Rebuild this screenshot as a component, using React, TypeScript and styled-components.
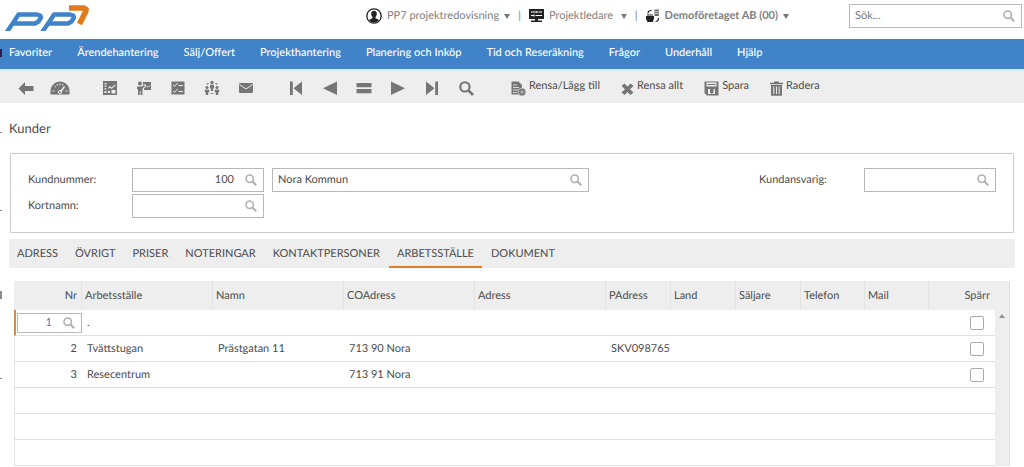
import React from 'react';
import styled, { createGlobalStyle } from 'styled-components';

const GlobalStyle = createGlobalStyle`
  *, *::before, *::after { box-sizing: border-box; }
  body {
    margin: 0;
    background: #fff;
    color: #4c4c4c;
    font-family: Lato, "Liberation Sans", sans-serif;
    font-size: 11px;
    line-height: 16px;
    text-rendering: geometricPrecision;
  }
  button, input { font: inherit; color: inherit; text-rendering: inherit; }
  button { border: 0; padding: 0; background: none; cursor: pointer; }
`;

const Page = styled.div`
  position: relative;
  overflow: hidden;
`;

const EdgeMark = styled.span<{ $top: number; $tall?: boolean; $dark?: boolean }>`
  position: absolute;
  left: 0;
  top: ${(p) => p.$top}px;
  width: 2px;
  height: ${(p) => (p.$tall ? 8 : 1)}px;
  background: ${(p) => (p.$dark ? '#2b1f4d' : '#8c8c8c')};
`;

const Header = styled.header`
  display: flex;
  align-items: flex-start;
  height: 39px;
  padding: 4px 2px 0 4px;
`;

const Logo = styled.a`
  display: block;
  svg { display: block; }
`;

const Context = styled.div`
  display: flex;
  align-items: center;
  gap: 8px;
  height: 24px;
  margin-left: auto;
  margin-right: 60px;
  color: #808080;
`;

const ContextButton = styled.button<{ $strong?: boolean }>`
  display: flex;
  align-items: center;
  gap: 5px;
  font-weight: ${(p) => (p.$strong ? 700 : 400)};
  svg { flex: none; }
`;

const Caret = styled.span`
  border: 3px solid transparent;
  border-top: 5px solid #777;
  border-bottom: 0;
`;

const Nav = styled.nav`
  display: flex;
  align-items: center;
  gap: 25px;
  height: 30px;
  padding: 0 9px 2px;
  background: #4083c9;
`;

const NavLink = styled.a`
  color: #fff;
  font-weight: 500;
  text-decoration: none;
  white-space: nowrap;
`;

const Toolbar = styled.div`
  display: flex;
  align-items: center;
  height: 34px;
  padding: 2px 9px 0;
  gap: 16px;
  border-top: 2px solid #d6ecfa;
  background: #eee;
`;

const ToolGroup = styled.div<{ $wide?: boolean }>`
  display: flex;
  gap: ${(p) => (p.$wide ? 21 : 0)}px;
  margin-left: ${(p) => (p.$wide ? 12 : 0)}px;
`;

const IconButton = styled.button`
  display: flex;
  align-items: center;
  justify-content: center;
  width: 34px;
  height: 24px;
  color: #757575;
`;

const TextButton = styled.button`
  display: flex;
  align-items: flex-start;
  gap: 3px;
  height: 20px;
  white-space: nowrap;
  svg { flex: none; margin-top: 3px; color: #757575; }
`;

const Title = styled.h1`
  margin: 0;
  padding: 15px 9px;
  font-size: 13px;
  line-height: 20px;
  font-weight: 400;
`;

const CustomerForm = styled.form`
  display: grid;
  grid-template-columns: 104px 132px minmax(100px, 325px) 1fr 105px 132px;
  grid-auto-rows: 24px;
  row-gap: 2px;
  align-items: center;
  margin: 0 10px 6px;
  padding: 14px 17px;
  border: 1px solid #ccc;
  border-radius: 2px;
  box-shadow: 0 0 1px #ccc;
`;

const Ansvarig = styled.label`
  grid-column: 5;
`;

const FieldBox = styled.div<{ $inset?: boolean; $small?: boolean }>`
  display: flex;
  align-items: center;
  height: ${(p) => (p.$small ? 20 : 24)}px;
  margin-left: ${(p) => (p.$inset ? 8 : 0)}px;
  padding-right: 6px;
  border: 1px solid #b8b8b8;
  background: #fff;
`;

const SearchBox = styled(FieldBox)`
  width: 173px;
`;

const TextInput = styled.input<{ $right?: boolean; $blue?: boolean }>`
  flex: 1;
  min-width: 0;
  height: 16px;
  padding: 0 5px;
  border: 0;
  outline: 0;
  background: none;
  text-align: ${(p) => (p.$right ? 'right' : 'left')};
  color: ${(p) => (p.$blue ? '#4083c9' : '#4c4c4c')};
  &::placeholder { color: #777; opacity: 1; }
`;

const LookupButton = styled.button`
  display: flex;
  margin-left: 6px;
  color: #b0b0b0;
`;

const Tabs = styled.div`
  display: flex;
  gap: 1px;
  height: 29px;
  margin: 0 9px 13px;
  background: #eee;
`;

const Tab = styled.button<{ $active?: boolean }>`
  padding: 0 8px;
  border-top: 2px solid transparent;
  border-bottom: 2px solid ${(p) => (p.$active ? '#e07b28' : 'transparent')};
  white-space: nowrap;
`;

const TableWrap = styled.div`
  margin: 0 15px 0 14px;
`;

const Grid = styled.table`
  width: 100%;
  table-layout: fixed;
  border-collapse: separate;
  border-spacing: 0;
  border-right: 1px solid #e2e2e2;
`;

const HeadCell = styled.th<{ $right?: boolean; $last?: boolean }>`
  height: 29px;
  padding: 1px 4px 0 3px;
  background: #eee;
  border-right: 1px solid ${(p) => (p.$last ? '#eee' : '#e2e2e2')};
  font-weight: 400;
  text-align: ${(p) => (p.$right ? 'right' : 'left')};
`;

const Cell = styled.td<{ $right?: boolean; $first?: boolean; $selected?: boolean }>`
  height: 26px;
  padding: ${(p) => (p.$selected ? '0 0 0 1px' : '0 5px')};
  border-bottom: 1px solid #e0e0e0;
  border-left: ${(p) => (p.$selected ? '2px solid #d98a4a' : p.$first ? '1px solid #e2e2e2' : '0')};
  text-align: ${(p) => (p.$right ? 'right' : 'left')};
  white-space: nowrap;
`;

const CheckCell = styled(Cell)`
  padding-right: 11px;
`;

const Check = styled.input`
  appearance: none;
  display: block;
  width: 14px;
  height: 14px;
  margin: 0 0 0 auto;
  border: 1px solid #aaa;
  border-radius: 2px;
  background: #fff;
`;

const ScrollTrack = styled.td`
  padding: 4px 0 0;
  background: #eee;
  vertical-align: top;
`;

const ScrollUp = styled.button`
  display: block;
  margin: 0 auto;
  border: 3px solid transparent;
  border-top: 0;
  border-bottom: 4px solid #909090;
`;

const Magnifier = ({ size = 12, width = 1.6 }: { size?: number; width?: number }) => (
  <svg width={size} height={size} viewBox="0 0 12 12" fill="none" stroke="currentColor" aria-hidden="true">
    <circle cx="4.7" cy="4.7" r="3.7" strokeWidth={width} />
    <path d="M7.5 7.5 L11.2 11.2" strokeWidth={width + 0.4} />
  </svg>
);

const Drawing = ({ w = 16, h = 16, children }: { w?: number; h?: number; children: React.ReactNode }) => (
  <svg width={w} height={h} viewBox={`0 0 ${w} ${h}`} fill="currentColor" aria-hidden="true">
    {children}
  </svg>
);

const BackIcon = () => (
  <Drawing><path d="M.5 8.500 7 2v4h8.500v5H7v4z" /></Drawing>
);

const GaugeIcon = () => (
  <Drawing w={20} h={16}>
    <path d="M10 1.500C4.500 1.500.5 6 .5 11v3.500h19V11C19.500 6 15.500 1.500 10 1.500z" />
    <g stroke="#eee" strokeWidth="1" fill="none">
      <path d="M2.500 11h2M15.500 11h2M4.500 6l1.300 1.200M10 3.300v2M7 4l.5 1.500M13 4l-.5 1.500" />
      <path d="M10.500 12 14.500 6.500" strokeWidth="1.500" />
      <circle cx="10" cy="12" r="1.600" />
    </g>
  </Drawing>
);

const PlanIcon = () => (
  <Drawing>
    <path d="M1 1h14v14H1z" />
    <g fill="#eee">
      <path d="M2.500 3h2v1.200h-2zM2.500 5.600h2v1.200h-2zM2.500 8.200h2v1.200h-2zM2.500 11h2v2h-2zM9.500 10h4v3.500h-4zM6 11h2v2H6z" />
      <path d="m6 8 2-2 1.500 1.500L13 4.500l.7.8-4.200 3.600L8 7.400 6.500 8.800z" />
    </g>
  </Drawing>
);

const TeacherIcon = () => (
  <Drawing>
    <circle cx="4" cy="3.500" r="2" />
    <path d="M1 6.500h5l2-1.500 1 1-2.500 2.500V15H4.600v-4h-.8v4H2V9L1 9.500z" />
    <path d="M7 2h8v8H8V8.500l2.500-2.800L8.800 4 7 5z" />
    <path d="m10.500 8 1.500-2 1 1 1.300-2" stroke="#ccc" fill="none" strokeWidth=".8" />
  </Drawing>
);

const ChecklistIcon = () => (
  <Drawing>
    <path d="M1.500 1.500h13v13h-13z" />
    <path d="m3 5 1.500 1.500L7.500 3M8.500 5.500h4.500M3 11l1.500 1.500L7.500 9M8.500 11.500h4.500" stroke="#eee" strokeWidth="1" fill="none" />
  </Drawing>
);

const PeopleIcon = () => (
  <Drawing>
    <circle cx="8" cy="2.500" r="1.700" />
    <path d="M6 4.800h4v3.400h-.8V11H6.800V8.200H6z" />
    <circle cx="3" cy="7.500" r="1.600" />
    <path d="M.8 9.700h4.400v2.600h-1V15H1.800v-2.700h-1z" />
    <circle cx="13" cy="7.500" r="1.600" />
    <path d="M10.800 9.700h4.400v2.600h-1V15h-2.400v-2.700h-1z" />
    <path d="M3 5V3.500h2M13 5V3.500h-2M6.500 13.500h3" stroke="currentColor" fill="none" strokeWidth=".8" />
  </Drawing>
);

const MailIcon = () => (
  <Drawing>
    <rect x="1" y="3" width="14" height="10" rx="1" />
    <path d="m1.500 4.500 6.500 4.500 6.500-4.500" stroke="#eee" strokeWidth="1" fill="none" />
  </Drawing>
);

const FirstIcon = () => (
  <Drawing><path d="M2 1.500h2.800v13.500H2zM14 1.500V15L5.500 8.200z" /></Drawing>
);
const PreviousIcon = () => (
  <Drawing><path d="M15 1.500V15L1 8.200z" /></Drawing>
);
const ListIcon = () => (
  <Drawing><path d="M.5 3h15v4.200h-15zM.5 9h15v4.200h-15z" /></Drawing>
);
const NextIcon = () => (
  <Drawing><path d="M1 1.500V15l14-6.800z" /></Drawing>
);
const LastIcon = () => (
  <Drawing><path d="M14 1.500h-2.800v13.500H14zM2 1.500V15l8.500-6.800z" /></Drawing>
);

const ClearAddIcon = () => (
  <Drawing w={15} h={15}>
    <path d="M.5.500h7L11 4v9.500H.500z" />
    <path d="M2 4h4M2 6.500h6M2 9h5M2 11.500h4" stroke="#eee" fill="none" strokeWidth=".8" />
    <circle cx="11" cy="11" r="3.900" stroke="#eee" strokeWidth=".6" />
    <path d="M11 9v4M9 11h4" stroke="#ccc" fill="none" strokeWidth=".8" />
  </Drawing>
);
const CrossIcon = () => (
  <Drawing w={13} h={15}>
    <path d="m.5 5 3-2.500 3 3 3-3L12.500 5 9 8.200l3.500 3.300-3 2.500-3-3-3 3-3-2.500L4 8.200z" />
  </Drawing>
);
const SaveIcon = () => (
  <Drawing w={15} h={15}>
    <path d="M.5.500h14v14H3L.500 12z" />
    <path d="M2.500 1.500h10v4h-10z" fill="#eee" />
    <path d="M3.500 3h8v1h-8z" />
    <path d="M4 8h7v5H4z" fill="#eee" />
    <path d="M6 7h3.500v4.500L7.800 13 6 11.500z" />
  </Drawing>
);
const TrashIcon = () => (
  <Drawing w={13} h={15}>
    <path d="M4 .5h5v1.300h4v1.500H0V1.800h4zM1 4h11v10.800H1z" />
    <path d="M3.800 5.500v7.500M6.500 5.500v7.500M9.200 5.500v7.500" stroke="#eee" strokeWidth="1" fill="none" />
  </Drawing>
);

const UserIcon = () => (
  <svg width="16" height="16" viewBox="0 0 16 16" aria-hidden="true">
    <circle cx="8" cy="8" r="7.200" fill="#fff" stroke="#222" strokeWidth="1.300" />
    <path d="M8 2.800c-2 0-3 1.400-2.800 3.200.1 1.300.7 2.300 1.300 2.900v1.300c-1 .5-2.500.8-3.500 1.700C4.300 13.500 6 14.500 8 14.500s3.700-1 5-2.600c-1-.9-2.500-1.200-3.500-1.700V8.900c.6-.6 1.200-1.600 1.300-2.900C11 4.200 10 2.800 8 2.800z" fill="#222" />
  </svg>
);
const RoleIcon = () => (
  <svg width="15" height="14" viewBox="0 0 15 14" aria-hidden="true">
    <path d="M0 0h15v10H0zM6 10h3v1.500h4V13H2v-1.500h4z" fill="#222" />
    <path d="M2 3h6M9.500 3H13M2 6.500h3M6.500 6.500H13M8 2v2M5 5.500v2" stroke="#fff" strokeWidth="1.100" />
  </svg>
);
const CompanyIcon = () => (
  <svg width="14" height="14" viewBox="0 0 14 14" aria-hidden="true">
    <path d="M0 7h8v2.500L6.800 13H1.500L0 10zM1 5.500h6v1H1z" fill="#222" />
    <path d="M2 4.500C2 2.500 3 1.500 5.500 1.500M9.500 12.500c2 0 3-1 3-3.500" stroke="#222" strokeWidth="1.200" fill="none" />
    <path d="M8.500.5h4.300v6.500H8.500z" fill="#666" />
    <path d="M9 2.500h3.500M9 4.500h3.500" stroke="#fff" strokeWidth=".7" />
  </svg>
);

const LogoMark = () => (
  <svg width="88" height="27" viewBox="4 4 88 27" role="img" aria-label="pp7" fill="none" strokeLinejoin="round">
    <g stroke="#4083c9" strokeWidth="4.400">
      <polyline points="5.500,34 15,20 18.500,14.500 37,14.500 40.300,15.500 41,17.500 38.500,21.500 35,23.500 14,23.500" />
      <polyline points="41,34 50.500,20 54,14.500 70,14.500 73.300,15.500 74,17.500 71.500,21.500 68,23.500 49,23.500" />
    </g>
    <polyline points="69,8 84,8 86.200,9.500 85.500,12 79.500,24" stroke="#e07b1e" strokeWidth="5.600" />
  </svg>
);

const Lookup = ({ label }: { label: string }) => (
  <LookupButton type="button" aria-label={label}><Magnifier /></LookupButton>
);

const navItems = ['Favoriter', 'Ärendehantering', 'Sälj/Offert', 'Projekthantering', 'Planering och Inköp', 'Tid och Reseräkning', 'Frågor', 'Underhåll', 'Hjälp'];
const tabs = ['ADRESS', 'ÖVRIGT', 'PRISER', 'NOTERINGAR', 'KONTAKTPERSONER', 'ARBETSSTÄLLE', 'DOKUMENT'];

const toolGroups = [
  [['Tillbaka', <BackIcon />], ['Översikt', <GaugeIcon />]],
  [['Plan', <PlanIcon />], ['Aktivitet', <TeacherIcon />], ['Checklista', <ChecklistIcon />], ['Personer', <PeopleIcon />], ['E-post', <MailIcon />]],
  [['Första', <FirstIcon />], ['Föregående', <PreviousIcon />], ['Lista', <ListIcon />], ['Nästa', <NextIcon />], ['Sista', <LastIcon />], ['Sök', <Magnifier size={15} width={1.7} />]],
] as [string, React.ReactNode][][];

const actions: [string, React.ReactNode][] = [
  ['Rensa/Lägg till', <ClearAddIcon />],
  ['Rensa allt', <CrossIcon />],
  ['Spara', <SaveIcon />],
  ['Radera', <TrashIcon />],
];

const columns: [string, number][] = [
  ['Nr', 68], ['Arbetsställe', 131], ['Namn', 131], ['COAdress', 131], ['Adress', 131],
  ['PAdress', 65], ['Land', 65], ['Säljare', 65], ['Telefon', 64], ['Mail', 64], ['Spärr', 66],
];

const rows = [
  { nr: '1', cells: ['.', '', '', '', '', '', '', '', ''] },
  { nr: '2', cells: ['Tvättstugan', 'Prästgatan 11', '713 90 Nora', '', 'SKV098765', '', '', '', ''] },
  { nr: '3', cells: ['Resecentrum', '', '713 91 Nora', '', '', '', '', '', ''] },
  ...[1, 2, 3].map(() => ({ nr: '', cells: Array(9).fill('') as string[] })),
];

export default function App() {
  return (
    <Page>
      <GlobalStyle />
      <Header>
        <Logo href="#"><LogoMark /></Logo>
        <Context>
          <ContextButton><UserIcon />PP7 projektredovisning<Caret /></ContextButton>
          <span>|</span>
          <ContextButton><RoleIcon />Projektledare&nbsp;<Caret /></ContextButton>
          <span>|</span>
          <ContextButton $strong><CompanyIcon />Demoföretaget AB (00)<Caret /></ContextButton>
        </Context>
        <SearchBox>
          <TextInput type="text" placeholder="Sök..." aria-label="Sök" />
          <Lookup label="Sök" />
        </SearchBox>
      </Header>

      <Nav>
        {navItems.map((item) => <NavLink key={item} href="#">{item}</NavLink>)}
      </Nav>

      <Toolbar>
        {toolGroups.map((group, i) => (
          <ToolGroup key={i}>
            {group.map(([label, icon]) => <IconButton key={label} aria-label={label}>{icon}</IconButton>)}
          </ToolGroup>
        ))}
        <ToolGroup $wide>
          {actions.map(([label, icon]) => <TextButton key={label}>{icon}{label}</TextButton>)}
        </ToolGroup>
      </Toolbar>

      <main>
        <Title>Kunder</Title>
        <CustomerForm>
          <label htmlFor="kundnummer">Kundnummer:</label>
          <FieldBox>
            <TextInput id="kundnummer" $right defaultValue="100" />
            <Lookup label="Sök kundnummer" />
          </FieldBox>
          <FieldBox $inset>
            <TextInput aria-label="Kundens namn" defaultValue="Nora Kommun" />
            <Lookup label="Sök kund" />
          </FieldBox>
          <Ansvarig htmlFor="kundansvarig">Kundansvarig:</Ansvarig>
          <FieldBox>
            <TextInput id="kundansvarig" />
            <Lookup label="Sök kundansvarig" />
          </FieldBox>
          <label htmlFor="kortnamn">Kortnamn:</label>
          <FieldBox>
            <TextInput id="kortnamn" />
            <Lookup label="Sök kortnamn" />
          </FieldBox>
        </CustomerForm>

        <Tabs role="tablist">
          {tabs.map((tab) => (
            <Tab key={tab} role="tab" aria-selected={tab === 'ARBETSSTÄLLE'} $active={tab === 'ARBETSSTÄLLE'}>{tab}</Tab>
          ))}
        </Tabs>

        <TableWrap>
          <Grid>
            <colgroup>
              {columns.map(([name, width]) => <col key={name} width={width} />)}
              <col width={14} />
            </colgroup>
            <thead>
              <tr>
                {columns.map(([name]) => (
                  <HeadCell key={name} scope="col" $right={name === 'Nr' || name === 'Spärr'} $last={name === 'Spärr'}>{name}</HeadCell>
                ))}
                <HeadCell as="td" $last />
              </tr>
            </thead>
            <tbody>
              {rows.map((row, i) => (
                <tr key={i}>
                  {i === 0 ? (
                    <Cell $selected>
                      <FieldBox $small>
                        <TextInput $right $blue defaultValue={row.nr} aria-label="Nr" />
                        <Lookup label="Sök arbetsställe" />
                      </FieldBox>
                    </Cell>
                  ) : (
                    <Cell $right $first>{row.nr}</Cell>
                  )}
                  {row.cells.map((text, j) => <Cell key={j}>{text}</Cell>)}
                  <CheckCell>
                    {row.nr && <Check type="checkbox" aria-label={`Spärr rad ${row.nr}`} />}
                  </CheckCell>
                  {i === 0 && (
                    <ScrollTrack rowSpan={rows.length}><ScrollUp aria-label="Rulla upp" /></ScrollTrack>
                  )}
                </tr>
              ))}
            </tbody>
          </Grid>
        </TableWrap>
      </main>

      <EdgeMark $top={49} $tall $dark />
      <EdgeMark $top={132} />
      <EdgeMark $top={210} />
      <EdgeMark $top={291} $tall />
      <EdgeMark $top={378} />
    </Page>
  );
}
